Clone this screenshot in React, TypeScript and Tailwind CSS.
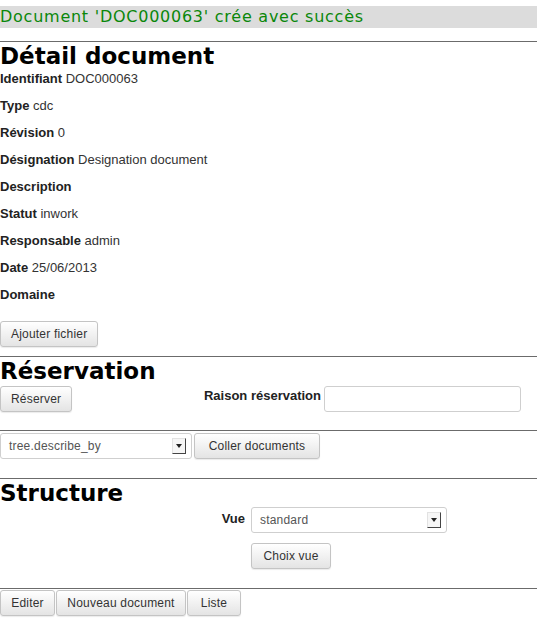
import React from "react"

const btn =
  "h-[26px] px-[10px] whitespace-nowrap rounded-[3px] border border-[#c4c4c4] bg-gradient-to-b from-white to-[#e4e4e4] text-[12px] leading-[24px] tracking-[0.2px] text-[#333] shadow-[0_1px_1px_rgba(0,0,0,0.08)]"

const Rule = ({ className = "" }: { className?: string }) => (
  <div className={"h-px bg-[#6b6b6b] " + className} />
)

const Heading = ({ children }: { children: React.ReactNode }) => (
  <h2 className="font-['DejaVu_Sans',sans-serif] text-[23px] leading-[28px] font-bold text-black">
    {children}
  </h2>
)

const Arrow = () => (
  <div className="w-[14px] h-[16px] border-t border-l border-[#e2e2e2] border-r border-b border-r-[#444] border-b-[#444] bg-[#f6f6f6] flex items-center justify-center">
    <svg width="6" height="4" viewBox="0 0 6 4">
      <path d="M0 0h6L3 4z" fill="#222" />
    </svg>
  </div>
)

const Select = ({ value, className }: { value: string; className: string }) => (
  <div
    className={
      "flex items-center justify-between rounded-[3px] border border-[#cfcfcf] bg-white pl-[8px] pr-[5px] text-[12px] tracking-[0.2px] text-[#555] " +
      className
    }
  >
    <span>{value}</span>
    <Arrow />
  </div>
)

const fields: [string, string][] = [
  ["Identifiant", "DOC000063"],
  ["Type", "cdc"],
  ["Révision", "0"],
  ["Désignation", "Designation document"],
  ["Description", ""],
  ["Statut", "inwork"],
  ["Responsable", "admin"],
  ["Date", "25/06/2013"],
  ["Domaine", ""],
]

export default function App() {
  return (
    <div className="w-[537px] min-h-[635px] bg-white pt-[6px] font-['Liberation_Sans',Arial,sans-serif] text-[13px] text-[#333]">
      <div className="h-[22px] bg-[#dcdcdc] font-['DejaVu_Sans',sans-serif] text-[16px] leading-[22px] tracking-[0.75px] text-[#0a870a]">
        Document 'DOC000063' crée avec succès
      </div>

      <Rule className="mt-[13px]" />
      <Heading>Détail document</Heading>
      <div className="mt-[2px] flex flex-col gap-[13px]">
        {fields.map(([k, v]) => (
          <div key={k} className="leading-[14px]">
            <b className="text-[#222]">{k}</b> {v}
          </div>
        ))}
      </div>
      <div className="mt-[19px] flex">
        <button className={btn}>Ajouter fichier</button>
      </div>

      <Rule className="mt-[9px]" />
      <Heading>Réservation</Heading>
      <div className="mt-px flex items-start">
        <button className={btn}>Réserver</button>
        <div className="flex-1" />
        <b className="mt-[3px] mr-[3px] leading-[14px] text-[#222]">Raison réservation</b>
        <div className="w-[197px] h-[26px] mr-[16px] rounded-[3px] border border-[#cfcfcf] bg-white" />
      </div>

      <Rule className="mt-[18px]" />
      <div className="mt-[2px] flex gap-[2px]">
        <Select value="tree.describe_by" className="w-[192px] h-[26px]" />
        <button className={btn + " w-[126px]"}>Coller documents</button>
      </div>

      <Rule className="mt-[19px]" />
      <Heading>Structure</Heading>
      <div className="flex">
        <div className="w-[245px] text-right">
          <b className="block mt-[5px] leading-[14px] text-[#222]">Vue</b>
        </div>
        <div className="ml-[6px] flex flex-col items-start">
          <Select value="standard" className="w-[196px] h-[26px]" />
          <button className={btn + " mt-[10px] w-[80px]"}>Choix vue</button>
        </div>
      </div>

      <Rule className="mt-[19px]" />
      <div className="mt-px flex gap-[1px]">
        <button className={btn + " w-[55px]"}>Editer</button>
        <button className={btn + " w-[130px] px-0"}>Nouveau document</button>
        <button className={btn + " w-[54px]"}>Liste</button>
      </div>
    </div>
  )
}
